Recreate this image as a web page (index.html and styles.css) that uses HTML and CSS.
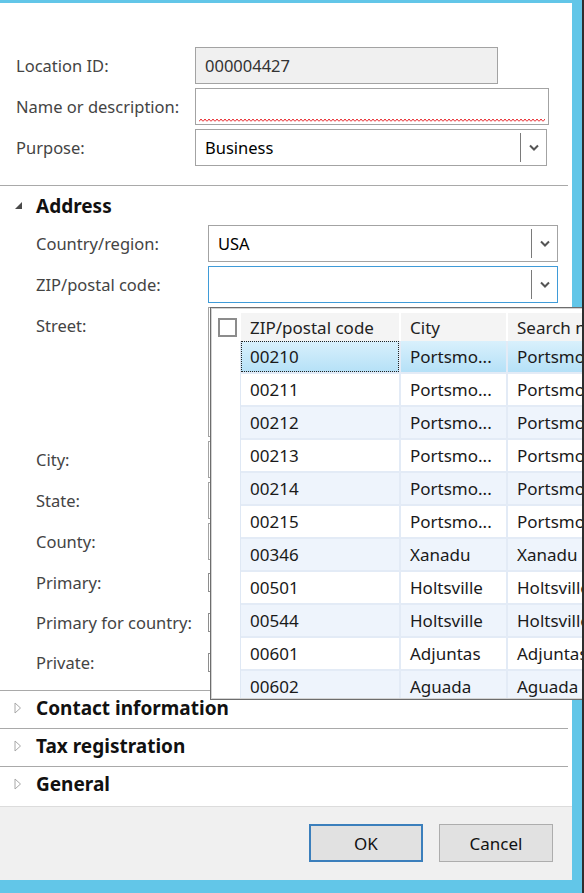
FILE: index.html
```html
<!DOCTYPE html>
<html lang="en">
<head>
    <meta charset="UTF-8">
    <title>Address</title>
    <link rel="stylesheet" href="styles.css">
</head>
<body>

<div class="screen">
    <div class="dialog">
        <div class="content">

            <!-- header fields -->
            <div class="form top-form">
                <div class="row">
                    <label>Location ID:</label>
                    <div class="field readonly id-field">000004427</div>
                </div>
                <div class="row">
                    <label>Name or description:</label>
                    <div class="field name-field">
                        <span class="value"></span>
                        <svg class="squiggle" width="346" height="4" viewBox="0 0 346 4">
                            <defs>
                                <pattern id="wave" width="4" height="4" patternUnits="userSpaceOnUse">
                                    <polyline points="0,3.5 2,1 4,3.5" fill="none" stroke="#e8262b" stroke-width="1"/>
                                </pattern>
                            </defs>
                            <rect width="346" height="4" fill="url(#wave)"/>
                        </svg>
                    </div>
                </div>
                <div class="row">
                    <label>Purpose:</label>
                    <div class="field combo purpose-field">
                        <span class="value">Business</span>
                        <span class="drop"><svg width="10" height="7" viewBox="0 0 10 7"><polyline points="1,1.5 5,5.5 9,1.5" fill="none" stroke="#555" stroke-width="2"/></svg></span>
                    </div>
                </div>
            </div>

            <!-- address -->
            <div class="section open">
                <div class="section-head">
                    <svg class="caret" width="8" height="8" viewBox="0 0 8 8"><polygon points="7,0 7,7 0,7" fill="#4a4a4a"/></svg>
                    Address
                </div>
                <div class="form addr-form">
                    <div class="row">
                        <label>Country/region:</label>
                        <div class="field combo wide">
                            <span class="value">USA</span>
                            <span class="drop"><svg width="10" height="7" viewBox="0 0 10 7"><polyline points="1,1.5 5,5.5 9,1.5" fill="none" stroke="#555" stroke-width="2"/></svg></span>
                        </div>
                    </div>
                    <div class="row">
                        <label>ZIP/postal code:</label>
                        <div class="field combo wide focused">
                            <span class="value"></span>
                            <span class="drop"><svg width="10" height="7" viewBox="0 0 10 7"><polyline points="1,1.5 5,5.5 9,1.5" fill="none" stroke="#555" stroke-width="2"/></svg></span>
                        </div>
                    </div>
                    <div class="row tall">
                        <label>Street:</label>
                        <div class="field wide street"></div>
                    </div>
                    <div class="row">
                        <label>City:</label>
                        <div class="field wide"></div>
                    </div>
                    <div class="row">
                        <label>State:</label>
                        <div class="field wide"></div>
                    </div>
                    <div class="row">
                        <label>County:</label>
                        <div class="field wide"></div>
                    </div>
                    <div class="row check-row">
                        <label>Primary:</label>
                        <div class="checkbox"></div>
                    </div>
                    <div class="row check-row">
                        <label>Primary for country:</label>
                        <div class="checkbox"></div>
                    </div>
                    <div class="row check-row">
                        <label>Private:</label>
                        <div class="checkbox"></div>
                    </div>
                </div>
            </div>

            <div class="section">
                <div class="section-head">
                    <svg class="caret" width="8" height="12" viewBox="0 0 8 12"><polygon points="1,1 6.5,6 1,11" fill="none" stroke="#a8a8a8" stroke-width="1"/></svg>
                    Contact information
                </div>
            </div>
            <div class="section">
                <div class="section-head">
                    <svg class="caret" width="8" height="12" viewBox="0 0 8 12"><polygon points="1,1 6.5,6 1,11" fill="none" stroke="#a8a8a8" stroke-width="1"/></svg>
                    Tax registration
                </div>
            </div>
            <div class="section last">
                <div class="section-head">
                    <svg class="caret" width="8" height="12" viewBox="0 0 8 12"><polygon points="1,1 6.5,6 1,11" fill="none" stroke="#a8a8a8" stroke-width="1"/></svg>
                    General
                </div>
            </div>
        </div>

        <div class="footer">
            <button class="btn default">OK</button>
            <button class="btn">Cancel</button>
        </div>
    </div>

    <!-- zip code lookup -->
    <div class="lookup">
        <div class="lookup-inner">
            <div class="grid-row grid-head">
                <div class="gutter"><span class="checkbox small"></span></div>
                <div class="cell c-zip">ZIP/postal code</div>
                <div class="cell c-city">City</div>
                <div class="cell c-search">Search name</div>
            </div>
            <div class="grid-body" id="zipRows"></div>
        </div>
    </div>
</div>

<script>
    var zips = [
        ['00210', 'Portsmo...', 'Portsmouth'],
        ['00211', 'Portsmo...', 'Portsmouth'],
        ['00212', 'Portsmo...', 'Portsmouth'],
        ['00213', 'Portsmo...', 'Portsmouth'],
        ['00214', 'Portsmo...', 'Portsmouth'],
        ['00215', 'Portsmo...', 'Portsmouth'],
        ['00346', 'Xanadu', 'Xanadu'],
        ['00501', 'Holtsville', 'Holtsville'],
        ['00544', 'Holtsville', 'Holtsville'],
        ['00601', 'Adjuntas', 'Adjuntas'],
        ['00602', 'Aguada', 'Aguada']
    ];

    var body = document.getElementById('zipRows');
    for (var i = 0; i < zips.length; i++) {
        var row = document.createElement('div');
        row.className = 'grid-row' + (i == 0 ? ' selected' : (i % 2 == 0 ? ' alt' : ''));
        row.innerHTML =
            '<div class="gutter"></div>' +
            '<div class="cell c-zip"><span class="cell-text">' + zips[i][0] + '</span></div>' +
            '<div class="cell c-city">' + zips[i][1] + '</div>' +
            '<div class="cell c-search">' + zips[i][2] + '</div>';
        body.appendChild(row);
    }
</script>

</body>
</html>
```

FILE: styles.css
```css
body {
    margin: 0;
    font-family: 'Noto Sans', 'Open Sans', sans-serif;
    font-size: 16.5px;
    color: #000;
}

.screen {
    position: relative;
    width: 584px;
    height: 893px;
    box-sizing: border-box;
    padding-top: 3px;
    background-color: #62c6e8;
    border-right: 2px solid #2e2e2e;
    overflow: hidden;
}

.dialog {
    width: 572px;
    height: 877px;
    background-color: white;
    display: flex;
    flex-direction: column;
}

.content {
    flex: 1;
    display: flex;
    flex-direction: column;
}

/* form rows */
.form .row {
    display: flex;
    align-items: center;
    height: 37px;
    margin-bottom: 4px;
}

.form label {
    color: #444;
    white-space: nowrap;
}

.top-form {
    padding: 44px 0 0 16px;
    margin-bottom: 15px;
}

.top-form label {
    width: 179px;
}

.addr-form {
    padding: 0 0 6px 36px;
}

.addr-form label {
    width: 172px;
}

.field {
    box-sizing: border-box;
    height: 37px;
    border: 1px solid #a3a3a3;
    background-color: white;
    display: flex;
    align-items: center;
    padding-left: 9px;
    position: relative;
}

.field.readonly {
    background-color: #f0f0f0;
    color: #333;
}

.id-field {
    width: 303px;
}

.name-field {
    width: 354px;
    flex-direction: column;
    align-items: stretch;
    padding: 0 3px 0 3px;
}

.name-field .value {
    flex: 1;
}

.name-field .squiggle {
    display: block;
    margin-bottom: 2px;
}

.purpose-field {
    width: 352px;
}

.combo .value {
    flex: 1;
}

.combo .drop {
    width: 25px;
    height: 29px;
    border-left: 1px solid #7a7a7a;
    display: flex;
    align-items: center;
    justify-content: center;
}

.field.wide {
    width: 350px;
}

.field.focused {
    border-color: #3f9bd8;
}

.row.tall {
    height: 130px;
    align-items: flex-start;
}

.row.tall label {
    padding-top: 7px;
}

.field.street {
    height: 130px;
}

.row.check-row {
    height: 36px;
}

.checkbox {
    box-sizing: border-box;
    width: 19px;
    height: 19px;
    border: 1px solid #8e8e8e;
    background-color: white;
    display: inline-block;
}

/* collapsible groups */
.section {
    border-top: 1px solid #a9a9a9;
    margin-right: 4px;
}

.section.last {
    flex: 1;
}

.section-head {
    display: flex;
    align-items: center;
    height: 37px;
    padding: 0 0 3px 14px;
    font-weight: bold;
    font-size: 19px;
    color: #111;
    box-sizing: border-box;
}

.section.open .section-head {
    height: 39px;
    padding-bottom: 0;
}

.section.open .section-head {
    padding-left: 15px;
}

.section-head .caret {
    margin-right: 14px;
}

.section.open .caret {
    margin-right: 13px;
}

/* footer buttons */
.footer {
    height: 74px;
    box-sizing: border-box;
    border-top: 1px solid #dcdcdc;
    background-color: #f0f0f0;
    display: flex;
    justify-content: flex-end;
    align-items: flex-start;
    padding: 17px 19px 0 0;
    gap: 16px;
}

.btn {
    width: 114px;
    height: 38px;
    background-color: #e1e1e1;
    border: 1px solid #adadad;
    font-family: inherit;
    font-size: 17px;
    color: #111;
}

.btn.default {
    border: 2px solid #3b7fbc;
}

/* lookup popup */
.lookup {
    position: absolute;
    left: 210px;
    top: 307px;
    width: 400px;
    height: 393px;
    box-sizing: border-box;
    border: 1px solid #6d6d6d;
    background-color: white;
    font-size: 17px;
}

.lookup-inner {
    height: 100%;
    border: 1px solid #d3d3d3;
    box-sizing: border-box;
    overflow: hidden;
    padding-top: 4px;
}

.grid-row {
    display: flex;
    height: 33px;
}

.grid-row .gutter {
    width: 29px;
    flex-shrink: 0;
    box-sizing: border-box;
    background-color: white;
    border-right: 1px solid #dfe8f4;
}

.grid-head {
    height: 28px;
}

.grid-head .gutter {
    border-right: none;
    display: flex;
    align-items: center;
    padding-left: 6px;
}

.checkbox.small {
    width: 19px;
    height: 19px;
    border: 2px solid #8c8c8c;
}

.cell {
    box-sizing: border-box;
    padding-left: 9px;
    display: flex;
    align-items: center;
    white-space: nowrap;
    overflow: hidden;
    border-right: 2px solid #e3ebf6;
    border-bottom: 2px solid #e3ebf6;
    color: #1a1a1a;
}

.c-zip {
    width: 160px;
}

.c-city {
    width: 107px;
}

.c-search {
    flex: 1;
}

.grid-head .cell {
    background-color: #f4f4f4;
    border-right: 2px solid white;
    border-bottom: none;
    color: #222;
}

.grid-row.alt .cell {
    background-color: #eef4fc;
}

.grid-row.selected .cell {
    background: linear-gradient(#d9f0fc, #b5e1f7);
}

.grid-row.selected .c-zip {
    padding-left: 0;
    align-items: stretch;
}

.cell-text {
    display: flex;
    align-items: center;
    flex: 1;
}

.grid-row.selected .cell-text {
    border: 1px dotted #222;
    padding-left: 8px;
}
```
